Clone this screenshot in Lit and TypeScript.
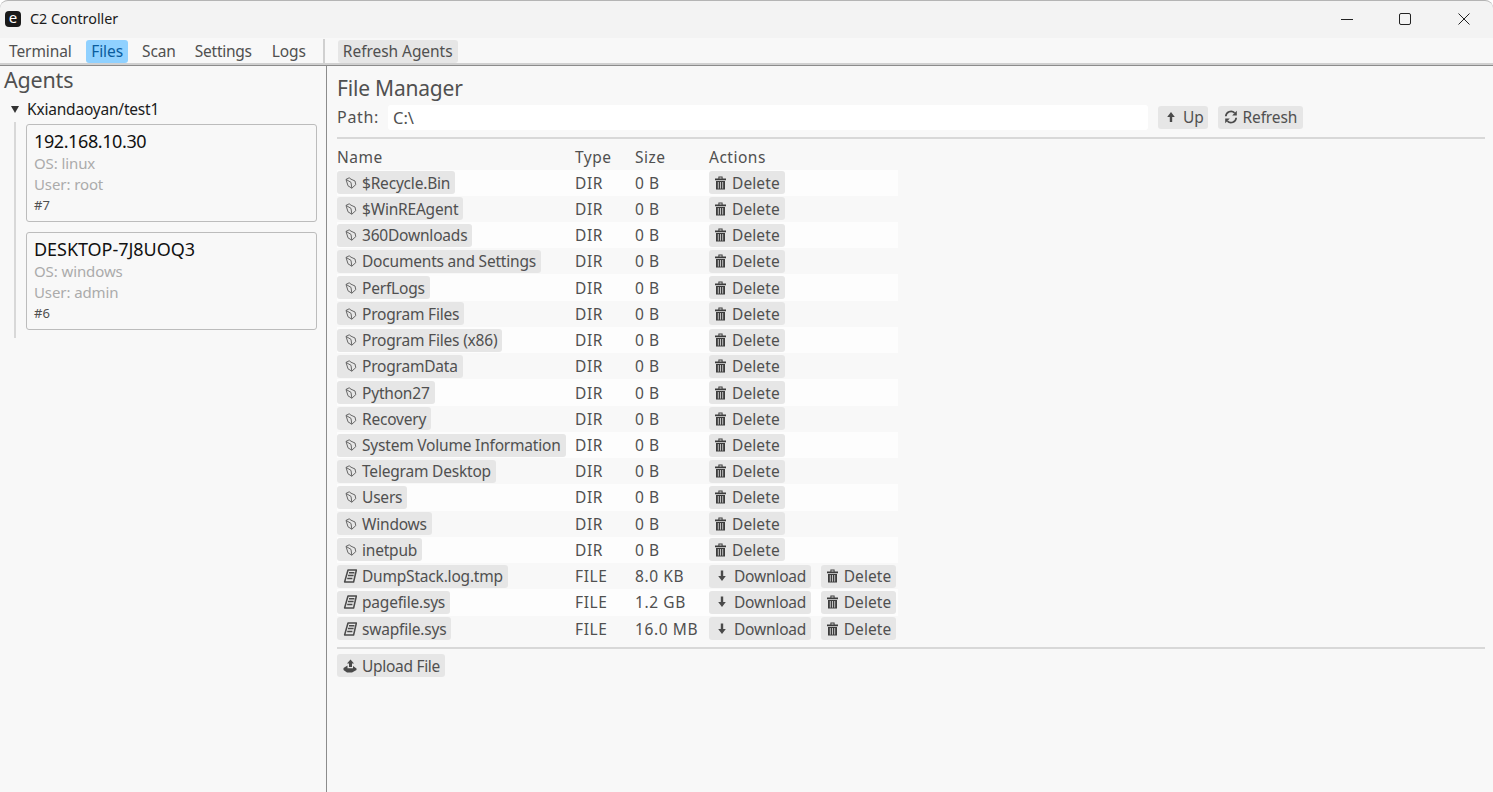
import { LitElement, html, css, svg } from "lit";
import { customElement } from "lit/decorators.js";

const folder = svg`<path d="M3 3.4 L6.2 1.8 L8 3.2 L12 5 L12.8 8.6 L8.8 12.2 L5 9.8 Z M3 3.4 L8 6.4 L8.8 12.2" fill="none" stroke="currentColor" stroke-width="1" stroke-linejoin="round"/>`;
const file = svg`<path d="M5 1 H13.4 L10.6 13 H1.6 L3 8 Z M6 3.8 H11.4 M5 6.6 H10.6 M4.2 9.6 H9.4" fill="none" stroke="currentColor" stroke-width="1.5" stroke-linejoin="round"/>`;
const trash = svg`<path d="M0 2.4 H11 V4.2 H0 Z M3.4 2.4 V.6 H7.6 V2.4 H6.6 V1.6 H4.4 V2.4 Z M1 5 H10 V13.4 H1 Z" fill="currentColor"/><path d="M3.3 6 V12.6 M5.5 6 V12.6 M7.7 6 V12.6" stroke="#e6e6e6" stroke-width=".8"/>`;
const down = svg`<path d="M5.8 1.5 H8.2 V7 H10.8 L7 12 L3.2 7 H5.8 Z" fill="currentColor"/>`;
const up = svg`<path d="M5.8 12 H8.2 V7 H10.8 L7 2 L3.2 7 H5.8 Z" fill="currentColor"/>`;
const refresh = svg`<path d="M1.8 6.2 A5.2 5.2 0 0 1 10.6 2.8 M12.2 7.8 A5.2 5.2 0 0 1 3.4 11.2" fill="none" stroke="currentColor" stroke-width="1.7"/><path d="M12.8 .8 V5.4 H8.2 Z M1.2 13.2 V8.6 H5.8 Z" fill="currentColor"/>`;
const upload = svg`<path d="M7.5 .5 L11 4.5 H9 V8 H6 V4.5 H4 Z M.5 9 L4.5 6.5 V9.2 H10 V7 L13.5 9.5 V11 L9 13.5 H4 L.5 11 Z" fill="currentColor"/>`;

const ico = (p: unknown, cls = "") => html`<svg class="ico ${cls}" viewBox="0 0 14 14" width="14" height="14">${p}</svg>`;
const trashIco = html`<svg class="ico trash" viewBox="0 0 12 14" width="12" height="14">${trash}</svg>`;

interface Entry { name: string; type: string; size: string; }
const dirs = ["$Recycle.Bin","$WinREAgent","360Downloads","Documents and Settings","PerfLogs","Program Files","Program Files (x86)","ProgramData","Python27","Recovery","System Volume Information","Telegram Desktop","Users","Windows","inetpub"];
const entries: Entry[] = [
  ...dirs.map((name) => ({ name, type: "DIR", size: "0 B" })),
  { name: "DumpStack.log.tmp", type: "FILE", size: "8.0 KB" },
  { name: "pagefile.sys", type: "FILE", size: "1.2 GB" },
  { name: "swapfile.sys", type: "FILE", size: "16.0 MB" },
];

@customElement("app-root")
export class AppRoot extends LitElement {
  static styles = css`
    :host { display: flex; flex-direction: column; width: 1493px; height: 792px; overflow: hidden; background: #fff;
      font-family: "Noto Sans", "Open Sans", sans-serif; font-size: 15px; color: #505050; box-sizing: border-box; }
    * { box-sizing: border-box; }
    .title { height: 38px; flex: none; background: #f3f3f3; border-top: 1px solid #b4b4b4; border-radius: 8px 8px 0 0; display: flex; align-items: center; padding: 0 23px 2px 5px; color: #1c1c1c; font-size: 14.3px; }
    .logo { width: 16px; height: 16px; border-radius: 4px; background: #1a1a1a; color: #fff; display: flex; align-items: center; justify-content: center; font-size: 15px; line-height: 1; margin-right: 9px; padding-bottom: 3px; }
    .caption { margin-left: auto; display: flex; align-items: center; gap: 46.6px; }
    .caption svg { display: block; }
    .menubar { height: 27px; flex: none; background: #f8f8f8; display: flex; align-items: center; padding: 2px 0 0 3px; border-bottom: 2px solid #d0d0d0; }
    .mi { height: 23px; padding: 0 6px 1px; margin-right: 8px; border-radius: 3px; display: flex; align-items: center; font-size: 15.5px; letter-spacing: -.1px; }
    .mi.term { margin-right: 8.6px; }
    .mi.on { background: #90d1ff; color: #0a5c9e; padding: 0 5px 1px; }
    .mi.scan { margin-right: 7px; }
    .mi.sett { letter-spacing: -.25px; }
    .vsep { width: 2px; height: 24px; background: #d0d0d0; margin: -1px 13px 0 3px; }
    .btn { height: 23px; padding: 0 5px; background: #e6e6e6; border-radius: 3px; display: inline-flex; align-items: center; font-size: 15.5px; letter-spacing: -.15px; white-space: nowrap; color: #505050; }
    .menubar .btn { letter-spacing: -.05px; padding-bottom: 1px; }
    .btn .ico { margin: 0 5px 0 1px; flex: none; }
    .ico { color: #4a4a4a; display: block; }
    .ico.dir { color: #666; }
    .ico.trash { color: #3c3c3c; }
    .body { flex: 1; display: flex; min-height: 0; border-top: 1px solid #8c8c8c; background: #f8f8f8; }
    .side { width: 327px; flex: none; border-right: 1px solid #8c8c8c; padding: 0 9px 0 4px; }
    h2 { margin: 0; font-weight: 400; font-size: 21.5px; line-height: 28px; letter-spacing: -.2px; color: #505050; }
    .group { display: flex; align-items: center; height: 26px; color: #1c1c1c; font-size: 15.5px; letter-spacing: -.2px; margin-top: 2px; }
    .tri { width: 0; height: 0; border-left: 4px solid transparent; border-right: 4px solid transparent; border-top: 7px solid #333; margin: 0 8px 0 7px; }
    .tree { margin-left: 10px; border-left: 2px solid #d8d8d8; padding: 2px 0 8px 10px; display: flex; flex-direction: column; gap: 10px; }
    .card { height: 98px; border: 1px solid #bcbcbc; border-radius: 3px; padding: 4px 7px; display: flex; flex-direction: column; background: #f8f8f8; }
    .host { color: #111; font-size: 18px; line-height: 24px; letter-spacing: -.05px; }
    .host.ip { letter-spacing: -.4px; }
    .meta { color: #ababab; font-size: 15px; line-height: 21px; letter-spacing: -.1px; }
    .num { color: #505050; font-size: 13px; line-height: 21px; }
    .main { flex: 1; padding: 6px 10px 0 10px; min-width: 0; }
    .main h2 { font-size: 21px; line-height: 32px; }
    .path { display: flex; align-items: center; height: 26px; }
    .path label { width: 51px; font-size: 16px; letter-spacing: .7px; }
    .input { width: 760px; height: 25px; background: #fff; border-radius: 3px; padding: 0 5px; display: flex; align-items: center; font-size: 16.5px; margin-right: 10px; }
    .path .btn { margin-right: 10px; }
    .path .btn.upb { padding-right: 4px; }
    .path .btn.refb { padding-right: 6px; }
    .rule { height: 2px; background: #d8d8d8; width: 1148px; }
    .rule.top { margin-top: 7px; }
    .rule.bottom { margin-top: 5.45px; }
    .t { width: 561px; display: grid; grid-template-columns: 238px 60px 74px 1fr; margin-top: 4.55px; }
    .tr { display: contents; }
    .th, .td { height: 26.235px; display: flex; align-items: center; font-size: 15.5px; white-space: nowrap; letter-spacing: .6px; }
    .th { height: 26px; letter-spacing: .5px; }
    .td .btn { letter-spacing: -.2px; }
    .td .btn.del { letter-spacing: .1px; }
    .odd > .td { background: #fdfdfd; }
    .acts { gap: 9.5px; }
    .foot { margin-top: 5px; display: flex; }
    .foot .btn { letter-spacing: -.3px; }
  `;

  private row(e: Entry, i: number) {
    return html`<div class="tr ${i % 2 ? "" : "odd"}">
      <div class="td"><span class="btn">${e.type === "DIR" ? ico(folder, "dir") : ico(file)}${e.name}</span></div>
      <div class="td">${e.type}</div>
      <div class="td">${e.size}</div>
      <div class="td acts">
        ${e.type === "FILE" ? html`<span class="btn">${ico(down)}Download</span>` : ""}
        <span class="btn del">${trashIco}Delete</span>
      </div>
    </div>`;
  }

  render() {
    return html`
      <div class="title">
        <span class="logo">e</span>C2 Controller
        <div class="caption">
          <svg width="12" height="12" viewBox="0 0 12 12"><path d="M0 6.5H12" stroke="#222" /></svg>
          <svg width="12" height="12" viewBox="0 0 12 12"><rect x=".5" y=".5" width="11" height="11" rx="1.5" fill="none" stroke="#222"/></svg>
          <svg width="12" height="12" viewBox="0 0 12 12"><path d="M.5.5L11.5 11.5M11.5.5L.5 11.5" stroke="#222"/></svg>
        </div>
      </div>
      <div class="menubar">
        <span class="mi term">Terminal</span><span class="mi on">Files</span><span class="mi scan">Scan</span><span class="mi sett">Settings</span><span class="mi">Logs</span>
        <span class="vsep"></span><span class="btn">Refresh Agents</span>
      </div>
      <div class="body">
        <aside class="side">
          <h2>Agents</h2>
          <div class="group"><span class="tri"></span>Kxiandaoyan/test1</div>
          <div class="tree">
            <div class="card"><div class="host ip">192.168.10.30</div><div class="meta">OS: linux</div><div class="meta">User: root</div><div class="num">#7</div></div>
            <div class="card"><div class="host">DESKTOP-7J8UOQ3</div><div class="meta">OS: windows</div><div class="meta">User: admin</div><div class="num">#6</div></div>
          </div>
        </aside>
        <main class="main">
          <h2>File Manager</h2>
          <div class="path"><label>Path:</label><div class="input">C:\\</div>
            <span class="btn upb">${ico(up)}Up</span><span class="btn refb">${ico(refresh)}Refresh</span></div>
          <div class="rule top"></div>
          <div class="t">
            <div class="th">Name</div><div class="th">Type</div><div class="th">Size</div><div class="th">Actions</div>
            ${entries.map((e, i) => this.row(e, i))}
          </div>
          <div class="rule bottom"></div>
          <div class="foot"><span class="btn">${ico(upload)}Upload File</span></div>
        </main>
      </div>`;
  }
}
